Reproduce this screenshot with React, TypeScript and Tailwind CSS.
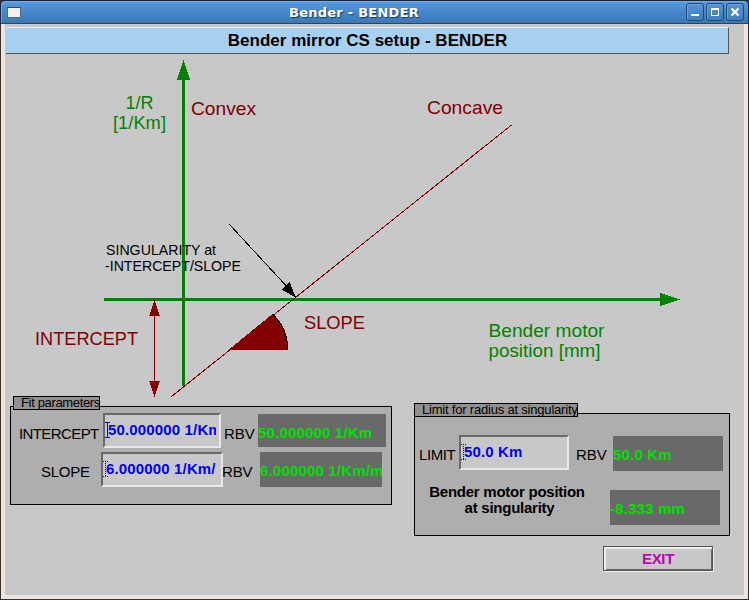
import type { ReactNode } from 'react';

function TitleButton({ children }: { children: ReactNode }) {
  return (
    <div className="h-[18px] w-[18px] rounded-[3px] border border-[#24486f] bg-linear-to-b from-[#5794d6] to-[#3e7cbb] shadow-[inset_1px_1px_0_#6ba4df]">
      <svg className="block h-4 w-4" viewBox="0 0 16 16" fill="none" stroke="#fff" shapeRendering="crispEdges">
        {children}
      </svg>
    </div>
  );
}

function Label({ x, y, w, size = 19, color, children }: { x: number; y: number; w: number; size?: number; color: string; children: string }) {
  return (
    <text x={x} y={y} fontSize={size} textLength={w} lengthAdjust="spacingAndGlyphs" fill={color}>
      {children}
    </text>
  );
}

function Diagram() {
  const green = '#008200';
  const red = '#820000';
  return (
    <svg className="block h-[342px] w-[739px] overflow-visible" viewBox="5 54 739 342" shapeRendering="crispEdges">
      <g fill={green}>
        <rect x="182" y="79" width="3" height="307" />
        <path d="M183.500 60L190 80H177Z" />
        <rect x="104" y="298" width="557" height="3" />
        <path d="M680 299.500L660 293V306Z" />
      </g>
      <path d="M171.500 396.500L511.500 125" stroke={red} />
      <path d="M229 349.500L272.500 314Q288 329 288 349.500Z" fill={red} />
      <path d="M272.500 314Q288 329 287.500 349" fill="none" stroke="#000" />
      <path d="M154.500 315V383" stroke={red} />
      <path d="M154.500 300L160 316H149ZM154.500 397L160 381H149Z" fill={red} />
      <path d="M229.500 224.500L290 290" stroke="#000" />
      <path d="M296 297.500L289.500 282L282 290Z" fill="#000" />
      <Label x={125.5} y={109} w={28} color={green}>1/R</Label>
      <Label x={113} y={129} w={53} color={green}>[1/Km]</Label>
      <Label x={191} y={115} w={65} color={red}>Convex</Label>
      <Label x={427} y={114} w={76} color={red}>Concave</Label>
      <Label x={35} y={345} w={103} color={red}>INTERCEPT</Label>
      <Label x={304} y={329} w={61} color={red}>SLOPE</Label>
      <Label x={488.5} y={337} w={116} color={green}>Bender motor</Label>
      <Label x={488.5} y={357} w={112} color={green}>position [mm]</Label>
      <Label x={106} y={255} w={110} size={15} color="#000">SINGULARITY at</Label>
      <Label x={105} y={271} w={136} size={15} color="#000">-INTERCEPT/SLOPE</Label>
    </svg>
  );
}

function Caret({ dotted = false }: { dotted?: boolean }) {
  return (
    <svg className="mt-[7px] block h-4 w-[5px] shrink-0" viewBox="0 0 5 16" shapeRendering="crispEdges" stroke="#0000ff" fill="none">
      <path d="M2.500 0V16" strokeDasharray={dotted ? '1 1' : undefined} />
      <path d="M0 .5H5M0 15.500H5" strokeDasharray={dotted ? '1 1' : undefined} />
    </svg>
  );
}

function Field({ className, text, dotted }: { className: string; text: string; dotted?: boolean }) {
  return (
    <div className={`flex h-[35px] shrink-0 overflow-hidden border-2 border-t-[#696969] border-r-[#e8e8e8] border-b-[#e8e8e8] border-l-[#696969] bg-[#c8c8c8] pr-[3px] ${className}`}>
      <Caret dotted={dotted} />
      <div className="-ml-[2px] h-[31px] flex-1 overflow-hidden text-[15px] leading-[29px] font-bold tracking-[0.15px] whitespace-nowrap text-[#0000ff]">{text}</div>
    </div>
  );
}

function Readback({ className, text }: { className: string; text: string }) {
  return (
    <div className={`shrink-0 overflow-hidden bg-[#696969] text-[15px] font-bold tracking-[0.18px] whitespace-nowrap text-[#00e100] ${className}`}>
      {text}
    </div>
  );
}

export default function App() {
  return (
    <div className="flex h-[600px] w-[749px] flex-col overflow-hidden bg-[#383030] font-['Liberation_Sans',Arial,sans-serif] text-black">
      <header className="flex h-6 shrink-0 items-center rounded-t-[5px] border border-t-[#1c2634] border-r-[#1c2634] border-b-[#284563] border-l-[#1c2634] bg-linear-to-b from-[#5b9bdf] via-[#4488cb] to-[#3c79b5] pr-[4px] pl-[6px] shadow-[inset_1px_1px_0_#70abe5]">
        <div className="h-[11px] w-[14px] border border-[#586878] border-t-[#28496b] bg-[#eeeeee]" />
        <div className="flex-1 pl-px text-center font-['DejaVu_Sans',sans-serif] text-[13px] leading-[23px] font-bold tracking-[0.25px] text-white [text-shadow:1px_1px_1px_#1c3856]">
          Bender - BENDER
        </div>
        <div className="flex gap-[2px]">
          <TitleButton><path d="M4 11H12" strokeWidth="2" /></TitleButton>
          <TitleButton><path d="M4.500 4.500H11.500V11.500H4.500ZM4 5.500H12" /></TitleButton>
          <TitleButton><path d="M4.500 4.500L11.500 11.500M11.500 4.500L4.500 11.500" strokeWidth="2.4" shapeRendering="auto" /></TitleButton>
        </div>
      </header>

      <div className="ml-px flex h-[575px] w-[747px] flex-col border-t-0 border-r-4 border-b-4 border-l-4 border-[#eae6de] bg-[#c8c8c8]">
        <div className="mt-[3px] ml-px h-[27px] w-[723px] shrink-0 border-t border-r border-b border-t-[#ebebeb] border-r-[#555] border-b-[#555] bg-[#a8d0f0] pl-px text-center text-[17px] leading-[25px] font-bold tracking-[0.03px]">
          Bender mirror CS setup - BENDER
        </div>

        <Diagram />

        <div className="flex h-[140px] shrink-0 items-start">
          <section className="relative mt-[10px] ml-[5px] h-[99px] w-[382px] border border-black bg-[#aeaeae]">
            <div className="absolute top-[-11px] left-[2px] h-[14px] w-[87px] border border-black bg-[#919191] pl-[7px] text-[13px] leading-[12px] tracking-[-0.35px] whitespace-nowrap">
              Fit parameters
            </div>
            <div className="mt-[6px] flex h-[35px]">
              <div className="w-[92px] pl-2 text-[15px] leading-[41px] tracking-[-0.6px]">INTERCEPT</div>
              <Field className="w-[118px]" text="50.000000 1/Km" />
              <div className="w-[37px] pl-[3px] text-[15px] leading-[41px] tracking-[-0.05px]">RBV</div>
              <Readback className="mt-px h-[33px] w-32 leading-[37px]" text="50.000000 1/Km" />
            </div>
            <div className="mt-1 flex h-[35px]">
              <div className="w-[90px] pl-[30px] text-[15px] leading-[39px] tracking-[-0.25px]">SLOPE</div>
              <Field className="w-[122px]" text="6.000000 1/Km/" dotted />
              <div className="-ml-px w-[38px] text-[15px] leading-[39px] tracking-[-0.2px]">RBV</div>
              <Readback className="h-[35px] w-[122px] leading-[38px]" text="6.000000 1/Km/m" />
            </div>
          </section>

          <section className="relative mt-[17px] ml-[22px] h-[123px] w-[316px] border border-black bg-[#aeaeae]">
            <div className="absolute top-[-11px] left-[-1px] h-[14px] w-[164px] border border-black bg-[#919191] pl-[7px] text-[13px] leading-[12px] tracking-[-0.2px] whitespace-nowrap">
              Limit for radius at singularity
            </div>
            <div className="mt-[21px] flex h-[35px]">
              <div className="w-11 pl-1 text-[15px] leading-[39px] tracking-[-0.4px]">LIMIT</div>
              <Field className="w-[110px]" text="50.0 Km" dotted />
              <div className="w-11 pl-[7px] text-[15px] leading-[39px] tracking-[-0.05px]">RBV</div>
              <Readback className="mt-px h-[35px] w-[110px] leading-[38px]" text="50.0 Km" />
            </div>
            <div className="mt-[20px] flex h-[35px]">
              <div className="w-[195px] text-center text-[15px] leading-4 font-bold tracking-[-0.25px]">
                <div className="-mt-[6px] mr-[11px]">Bender motor position<br /><span className="ml-[5px]">at singularity</span></div>
              </div>
              <Readback className="h-[35px] w-[110px] leading-[38px]" text="-8.333 mm" />
            </div>
          </section>
        </div>

        <button className="mt-[10px] ml-[598px] h-[25px] w-[110px] shrink-0 border border-[#555] bg-[#c8c8c8] text-[15px] leading-[23px] font-bold tracking-[-0.3px] text-[#c000c0] shadow-[inset_2px_2px_0_#eeeeee,inset_-1px_-1px_0_#696969,1px_1px_0_#eeeeee]">
          EXIT
        </button>
      </div>
    </div>
  );
}
